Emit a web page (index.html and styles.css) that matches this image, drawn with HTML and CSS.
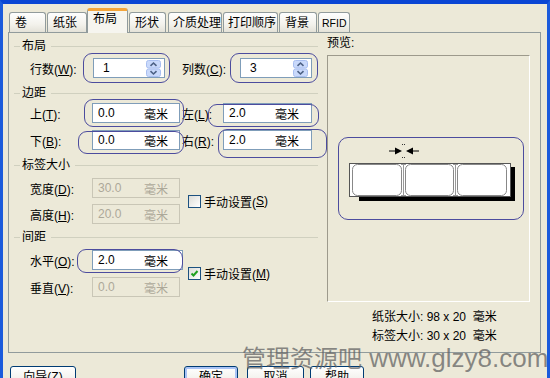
FILE: index.html
```html
<!DOCTYPE html>
<html lang="zh-CN">
<head>
    <meta charset="UTF-8">
    <title>布局</title>
    <link rel="stylesheet" href="styles.css">
</head>
<body>
  <div class="window">
    <ul class="tabs">
      <li class="t1">卷</li>
      <li class="t2">纸张</li>
      <li class="t3 on">布局</li>
      <li class="t4">形状</li>
      <li class="t5">介质处理</li>
      <li class="t6">打印顺序</li>
      <li class="t7">背景</li>
      <li class="t8">RFID</li>
    </ul>
    <div class="panel">
      <div class="left">
        <div class="group g1">布局</div>
        <div class="row r1">
          <span class="lab lab-w">行数(<u>W</u>):</span>
          <div class="spin">
            <span>1</span>
            <svg class="arrows" width="15" height="17" viewBox="0 0 15 17">
              <rect x=".5" y=".5" width="14" height="7.5" rx="2" fill="#c9d9fb" stroke="#a9bff0"/>
              <rect x=".5" y="9" width="14" height="7.5" rx="2" fill="#c9d9fb" stroke="#a9bff0"/>
              <path d="M4.5 5.8 L7.5 3 L10.5 5.8" fill="none" stroke="#4d6185" stroke-width="1.6"/>
              <path d="M4.5 11.2 L7.5 14 L10.5 11.2" fill="none" stroke="#4d6185" stroke-width="1.6"/>
            </svg>
            <b class="ring ring-rows"></b>
          </div>
          <span class="lab lab-c">列数(<u>C</u>):</span>
          <div class="spin">
            <span>3</span>
            <svg class="arrows" width="15" height="17" viewBox="0 0 15 17">
              <rect x=".5" y=".5" width="14" height="7.5" rx="2" fill="#c9d9fb" stroke="#a9bff0"/>
              <rect x=".5" y="9" width="14" height="7.5" rx="2" fill="#c9d9fb" stroke="#a9bff0"/>
              <path d="M4.5 5.8 L7.5 3 L10.5 5.8" fill="none" stroke="#4d6185" stroke-width="1.6"/>
              <path d="M4.5 11.2 L7.5 14 L10.5 11.2" fill="none" stroke="#4d6185" stroke-width="1.6"/>
            </svg>
            <b class="ring ring-cols"></b>
          </div>
        </div>

        <div class="group g2">边距</div>
        <div class="row r2">
          <span class="lab">上(<u>T</u>):</span>
          <div class="box"><span class="val">0.0</span>毫米<b class="ring ring-top"></b></div>
          <span class="lab lab-side">左(<u>L</u>):</span>
          <div class="box box-side"><span class="val">2.0</span>毫米<b class="ring ring-left"></b></div>
        </div>
        <div class="row r3">
          <span class="lab">下(<u>B</u>):</span>
          <div class="box"><span class="val">0.0</span>毫米<b class="ring ring-bottom"></b></div>
          <span class="lab lab-side">右(<u>R</u>):</span>
          <div class="box box-side"><span class="val">2.0</span>毫米<b class="ring ring-right"></b></div>
        </div>

        <div class="group g3">标签大小</div>
        <div class="pair p1">
          <div class="rows">
            <div class="row">
              <span class="lab">宽度(<u>D</u>):</span>
              <div class="box off"><span class="val">30.0</span>毫米</div>
            </div>
            <div class="row second">
              <span class="lab">高度(<u>H</u>):</span>
              <div class="box off"><span class="val">20.0</span>毫米</div>
            </div>
          </div>
          <div class="check"><span class="cb"></span>手动设置(<u>S</u>)</div>
        </div>

        <div class="group g4">间距</div>
        <div class="pair p2">
          <div class="rows">
            <div class="row">
              <span class="lab">水平(<u>O</u>):</span>
              <div class="box wide"><span class="val">2.0</span>毫米<b class="ring ring-gap"></b></div>
            </div>
            <div class="row second s2">
              <span class="lab">垂直(<u>V</u>):</span>
              <div class="box off"><span class="val">0.0</span>毫米</div>
            </div>
          </div>
          <div class="check check-on">
            <span class="cb">
              <svg width="11" height="11" viewBox="0 0 11 11"><path d="M2.5 5.5 L4.5 7.5 L8.5 3" fill="none" stroke="#21a121" stroke-width="2"/></svg>
            </span>手动设置(<u>M</u>)
          </div>
        </div>
      </div>

      <div class="right">
        <div class="title">预览:</div>
        <div class="preview">
          <div class="ring-preview">
            <svg width="183" height="80" viewBox="0 0 183 80">
              <rect x="20" y="29" width="156" height="34" fill="#000"/>
              <rect x="10.5" y="25.5" width="161" height="33" fill="#fff" stroke="#555"/>
              <rect x="13.5" y="26.5" width="49" height="31" rx="5" fill="#fff" stroke="#888"/>
              <rect x="66.5" y="26.5" width="48" height="31" rx="5" fill="#fff" stroke="#888"/>
              <rect x="118.5" y="26.5" width="49" height="31" rx="5" fill="#fff" stroke="#888"/>
              <path d="M64.5 27 V57 M62 26.5 H67 M62 57.5 H67 M116.5 27 V57 M114 26.5 H119 M114 57.5 H119" stroke="#999" fill="none"/>
              <path d="M50 13 H60 M80 13 H70" stroke="#000" stroke-width="1"/>
              <polygon points="56,9.5 63,13 56,16.5" fill="#000"/>
              <polygon points="74,9.5 67,13 74,16.5" fill="#000"/>
              <rect x="63" y="6" width="1" height="1" fill="#333"/>
              <rect x="65" y="6" width="1" height="1" fill="#333"/>
              <rect x="63" y="19" width="1" height="1" fill="#333"/>
              <rect x="65" y="19" width="1" height="1" fill="#333"/>
            </svg>
          </div>
        </div>
        <div class="sizes">
          <div>纸张大小: 98 x 20&nbsp; 毫米</div>
          <div>标签大小: 30 x 20&nbsp; 毫米</div>
        </div>
      </div>
    </div>

    <div class="footer">
      <div class="btn b-wizard">向导(<u>Z</u>)</div>
      <div class="btn b-ok">确定</div>
      <div class="btn b-cancel">取消</div>
      <div class="btn b-help">帮助</div>
    </div>

    <div class="mark"><span class="mark-cn">管理资源吧</span> www.glzy8.com</div>
  </div>
</body>
</html>
```

FILE: styles.css
```css
* {
  margin: 0px;
  padding: 0px;
}
body {
  background: #ece9d8;
  font: 12px "Liberation Sans", "Noto Sans CJK SC", sans-serif;
  color: #000;
}
u {
  text-decoration: underline;
}
.window {
  position: relative;
  width: 550px;
  height: 378px;
  box-sizing: border-box;
  border-top: 4px solid #0a46d4;
  border-left: 3px solid #1b5bdc;
  border-right: 3px solid #1b5bdc;
  background: #ece9d8;
  overflow: hidden;
}

/* tabs */
.tabs {
  display: flex;
  align-items: flex-end;
  height: 24px;
  margin: 4px 0 0 6px;
  list-style: none;
  position: relative;
  z-index: 1;
}
.tabs li {
  height: 20px;
  box-sizing: border-box;
  border: 1px solid #919b9c;
  border-bottom: 0;
  border-radius: 3px 3px 0 0;
  background: linear-gradient(#fefefe, #f3f2ec 60%, #e4e2d8);
  padding: 2px 0 0 5px;
  line-height: 16px;
  white-space: nowrap;
  overflow: hidden;
}
.tabs li.on {
  height: 25px;
  margin-bottom: -1px;
  border-top: 3px solid #f4a53a;
  background: #f6f5ef;
  padding-top: 0px;
}
.t1 { width: 37px; }
.t2 { width: 40px; margin-left: 1px; }
.t3 { width: 41px; }
.t4 { width: 37px; margin-left: 1px; }
.t5 { width: 54px; margin-left: 2px; padding-left: 4px !important; }
.t6 { width: 55px; margin-left: 1px; padding-left: 4px !important; }
.t7 { width: 38px; margin-left: 1px; }
.t8 {
  width: 32px;
  margin-left: 1px;
  padding-left: 3px !important;
  font-size: 10.5px;
}

/* panel */
.panel {
  display: flex;
  width: 533px;
  height: 321px;
  margin-left: 5px;
  box-sizing: border-box;
  border: 1px solid #919b9c;
  background: #ece9d8;
  padding-left: 5px;
}
.left {
  width: 304px;
}
.group {
  display: flex;
  align-items: center;
  height: 14px;
  line-height: 14px;
}
.group::before {
  content: "";
  width: 6px;
  border-top: 1px solid #d0d0bf;
  margin-right: 2px;
}
.group::after {
  content: "";
  flex-grow: 1;
  border-top: 1px solid #d0d0bf;
  margin-left: 5px;
}
.g1 { margin-top: 6px; }
.g2 { margin-top: 8px; }
.g3 { margin-top: 8px; }
.g4 { margin-top: 6px; }
.row {
  display: flex;
  align-items: center;
  height: 20px;
  padding-left: 16px;
}
.r1 { margin-top: 5px; }
.r2 { margin-top: 3px; }
.r3 { margin-top: 7px; }
.lab {
  width: 62px;
  white-space: nowrap;
}
.lab-w { width: 63px; }
.lab-c {
  width: 58px;
  margin-left: 17px;
}
.lab-side {
  width: 41px;
  padding-left: 2px;
}

.spin {
  position: relative;
  display: flex;
  align-items: center;
  width: 72px;
  height: 20px;
  box-sizing: border-box;
  border: 1px solid #7f9db9;
  background: #fff;
  padding-left: 9px;
}
.arrows {
  margin-left: auto;
  margin-right: 3px;
}
.box {
  position: relative;
  display: flex;
  align-items: center;
  width: 88px;
  height: 20px;
  box-sizing: border-box;
  border: 1px solid #7f9db9;
  background: #fff;
  padding-left: 5px;
}
.box-side { width: 89px; }
.box.wide { width: 91px; }
.box.off {
  border-color: #c9c6b6;
  background: #ece9d8;
  color: #aca899;
}
.val {
  width: 46px;
}

/* hand-drawn marks */
.ring {
  position: absolute;
  border: 1.5px solid #4c4c9e;
  border-radius: 9px;
  pointer-events: none;
}
.ring-rows { top: -6px; right: -6px; bottom: -6px; left: -11px; }
.ring-cols { top: -6px; right: -7px; bottom: -6px; left: -11px; }
.ring-top { top: -5px; right: -5px; bottom: -5px; left: -9px; }
.ring-left { top: 0px; right: -8px; bottom: -5px; left: -16px; }
.ring-bottom { top: 0px; right: -5px; bottom: -5px; left: -15px; }
.ring-right { top: -2px; right: -16px; bottom: -9px; left: -6px; }
.ring-gap { top: -2px; right: -1px; bottom: -4px; left: -16px; }

.pair {
  display: flex;
}
.p1 { margin-top: 6px; }
.p2 { margin-top: 6px; }
.rows .second { margin-top: 6px; }
.rows .s2 { margin-top: 7px; }
.check {
  display: flex;
  align-items: center;
  align-self: center;
  margin-left: 8px;
  white-space: nowrap;
}
.check-on { margin-left: 5px; }
.cb {
  display: flex;
  align-items: center;
  justify-content: center;
  width: 13px;
  height: 13px;
  box-sizing: border-box;
  border: 1px solid #1c5180;
  background: linear-gradient(135deg, #dcdcd7, #fff);
  margin-right: 3px;
}

/* preview */
.right {
  width: 203px;
  margin-left: 9px;
}
.title {
  margin-top: 3px;
  height: 14px;
  line-height: 14px;
}
.preview {
  height: 247px;
  margin-top: 5px;
  box-sizing: border-box;
  border: 1px solid;
  border-color: #9d9a8c #fff #fff #9d9a8c;
}
.ring-preview {
  width: 186px;
  height: 83px;
  box-sizing: border-box;
  margin: 81px 0 0 10px;
  border: 1.5px solid #4c4c9e;
  border-radius: 10px;
}
.ring-preview svg {
  display: block;
}
.sizes {
  margin-top: 6px;
  padding-left: 45px;
  line-height: 19px;
}

/* buttons */
.footer {
  display: flex;
  margin-top: 13px;
  padding-left: 7px;
}
.btn {
  height: 23px;
  box-sizing: border-box;
  border: 1px solid #003c74;
  border-radius: 3px;
  background: linear-gradient(#fff, #f0efe9 70%, #d8d2c6);
  text-align: center;
  line-height: 20px;
}
.b-wizard { width: 66px; }
.b-ok {
  width: 54px;
  margin-left: 108px;
  box-shadow: inset 0 0 0 2px #a9c3f5;
}
.b-cancel {
  width: 57px;
  margin-left: 9px;
}
.b-help {
  width: 54px;
  margin-left: 6px;
}

.mark {
  position: absolute;
  left: 239px;
  top: 339px;
  white-space: nowrap;
  color: rgba(95, 95, 95, 0.72);
  font-size: 26px;
  line-height: 30px;
}
.mark-cn {
  font-size: 24px;
}
```
